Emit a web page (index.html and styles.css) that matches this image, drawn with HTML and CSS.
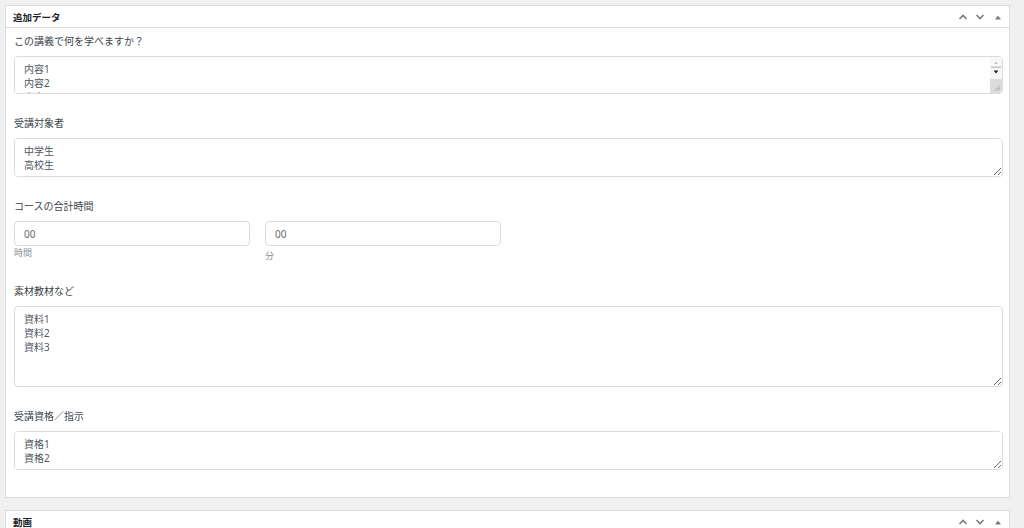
FILE: index.html
```html
<!DOCTYPE html>
<html lang="ja">
<head>
  <meta charset="UTF-8">
  <meta name="viewport" content="width=device-width, initial-scale=1.0">
  <title>追加データ</title>
  <link rel="stylesheet" href="styles.css">
</head>
<body>
  <div class="postbox">
    <div class="postbox-header">
      <h2 class="hndle">追加データ</h2>
      <div class="handle-actions">
        <button class="handle-btn" type="button" aria-label="上へ移動">
          <svg width="10" height="8" viewBox="0 0 10 8"><path d="M1.5 6 L5 2.5 L8.5 6" fill="none" stroke="#787c82" stroke-width="1.6"/></svg>
        </button>
        <button class="handle-btn" type="button" aria-label="下へ移動">
          <svg width="10" height="8" viewBox="0 0 10 8"><path d="M1.5 2 L5 5.5 L8.5 2" fill="none" stroke="#787c82" stroke-width="1.6"/></svg>
        </button>
        <button class="handle-btn toggle" type="button" aria-label="パネルを切り替え">
          <svg width="8" height="8" viewBox="0 0 8 8"><path d="M1 6.5 L4 2.5 L7 6.5 Z" fill="#787c82"/></svg>
        </button>
      </div>
    </div>
    <div class="inside">
      <div class="field">
        <label for="learn">この講義で何を学べますか？</label>
        <div class="scroll-wrap">
          <textarea id="learn" class="scroll" rows="2">内容1
内容2
内容3</textarea>
          
          <div class="fake-scrollbar">
            <svg width="12" height="36" viewBox="0 0 12 36">
              <path d="M4 7 L6 4.5 L8 7 Z" fill="#c3c4c7"/>
              <rect x="1" y="9.5" width="10" height="1.5" fill="#c3c4c7"/>
              <path d="M3.5 13.5 L6 16.5 L8.5 13.5 Z" fill="#1d2327"/>
              <rect x="0" y="22" width="12" height="14" fill="#dcdcde"/>
              <path d="M5 33.5 L10 28.5 M7.5 33.5 L10 31" stroke="#8c8f94" stroke-width="0.8"/>
            </svg>
          </div>
        </div>
      </div>

      <div class="field">
        <label for="target">受講対象者</label>
        <textarea id="target" rows="2">中学生
高校生</textarea>
      </div>

      <div class="field">
        <label>コースの合計時間</label>
        <div class="duration">
          <div class="duration-item">
            <input type="text" value="00">
            <span class="desc">時間</span>
          </div>
          <div class="duration-item">
            <input type="text" value="00">
            <span class="desc low">分</span>
          </div>
        </div>
      </div>

      <div class="field">
        <label for="materials">素材教材など</label>
        <textarea id="materials" class="tall" rows="5">資料1
資料2
資料3</textarea>
      </div>

      <div class="field">
        <label for="requirements">受講資格／指示</label>
        <textarea id="requirements" rows="2">資格1
資格2</textarea>
      </div>
    </div>
  </div>

  <div class="postbox">
    <div class="postbox-header">
      <h2 class="hndle">動画</h2>
      <div class="handle-actions">
        <button class="handle-btn" type="button" aria-label="上へ移動">
          <svg width="10" height="8" viewBox="0 0 10 8"><path d="M1.5 6 L5 2.5 L8.5 6" fill="none" stroke="#787c82" stroke-width="1.6"/></svg>
        </button>
        <button class="handle-btn" type="button" aria-label="下へ移動">
          <svg width="10" height="8" viewBox="0 0 10 8"><path d="M1.5 2 L5 5.5 L8.5 2" fill="none" stroke="#787c82" stroke-width="1.6"/></svg>
        </button>
        <button class="handle-btn toggle" type="button" aria-label="パネルを切り替え">
          <svg width="8" height="8" viewBox="0 0 8 8"><path d="M1 6.5 L4 2.5 L7 6.5 Z" fill="#787c82"/></svg>
        </button>
      </div>
    </div>
    <div class="inside empty"></div>
  </div>
</body>
</html>
```

FILE: styles.css
```css
html, body {
  height: 100%;
  overflow: hidden;
}

body {
  margin: 0;
  padding: 5px 14px 0 5px;
  background: #f0f0f0;
  font-family: "Noto Sans", "Noto Sans CJK JP", sans-serif;
  font-size: 10px;
  color: #3c434a;
}

.postbox {
  background: #fff;
  border: 1px solid #dcdcde;
  margin-bottom: 12px;
}

.postbox-header {
  display: flex;
  align-items: center;
  justify-content: space-between;
  height: 21px;
  border-bottom: 1px solid #dcdcde;
}

.hndle {
  margin: 0;
  padding-left: 7px;
  font-size: 9.5px;
  font-weight: bold;
  color: #1d2327;
}

.handle-actions {
  display: flex;
  align-items: center;
  padding-right: 1px;
}

.handle-btn {
  display: flex;
  align-items: center;
  justify-content: center;
  width: 17px;
  height: 20px;
  padding: 0;
  border: none;
  background: none;
}

.handle-btn.toggle {
  width: 20px;
}

.inside {
  padding: 6px 6px 27px 8px;
}

.inside.empty {
  height: 60px;
}

.field {
  display: flex;
  flex-direction: column;
  margin-bottom: 22px;
}

.field:last-child {
  margin-bottom: 0;
}

label {
  line-height: 14px;
  margin-bottom: 8px;
}

textarea, input[type="text"] {
  box-sizing: border-box;
  font-family: inherit;
  font-size: 10px;
  color: #50575e;
  border: 1px solid #dcdcde;
  border-radius: 4px;
  background: #fff;
}

textarea {
  display: block;
  width: 100%;
  height: 39px;
  padding: 5px 9px;
  line-height: 14px;
  resize: vertical;
}

.scroll-wrap {
  position: relative;
}

textarea.scroll {
  height: 38px;
  overflow-y: scroll;
  padding-right: 20px;
}

textarea.scroll::-webkit-scrollbar {
  display: none;
}

.fake-scrollbar {
  position: absolute;
  top: 1px;
  right: 1px;
  width: 12px;
  height: 36px;
  border-radius: 0 3px 3px 0;
  overflow: hidden;
  background: #f6f7f7;
}

.fake-scrollbar svg {
  display: block;
}

textarea.tall {
  height: 81px;
}

.duration {
  display: flex;
  gap: 15px;
}

.duration-item {
  display: flex;
  flex-direction: column;
  width: 236px;
}

input[type="text"] {
  height: 25px;
  padding: 0 9px;
  color: #646970;
}

.desc {
  margin-top: 1px;
  font-size: 9px;
  line-height: 12px;
  color: #8c8f94;
}

.desc.low {
  margin-top: 4px;
}
```
